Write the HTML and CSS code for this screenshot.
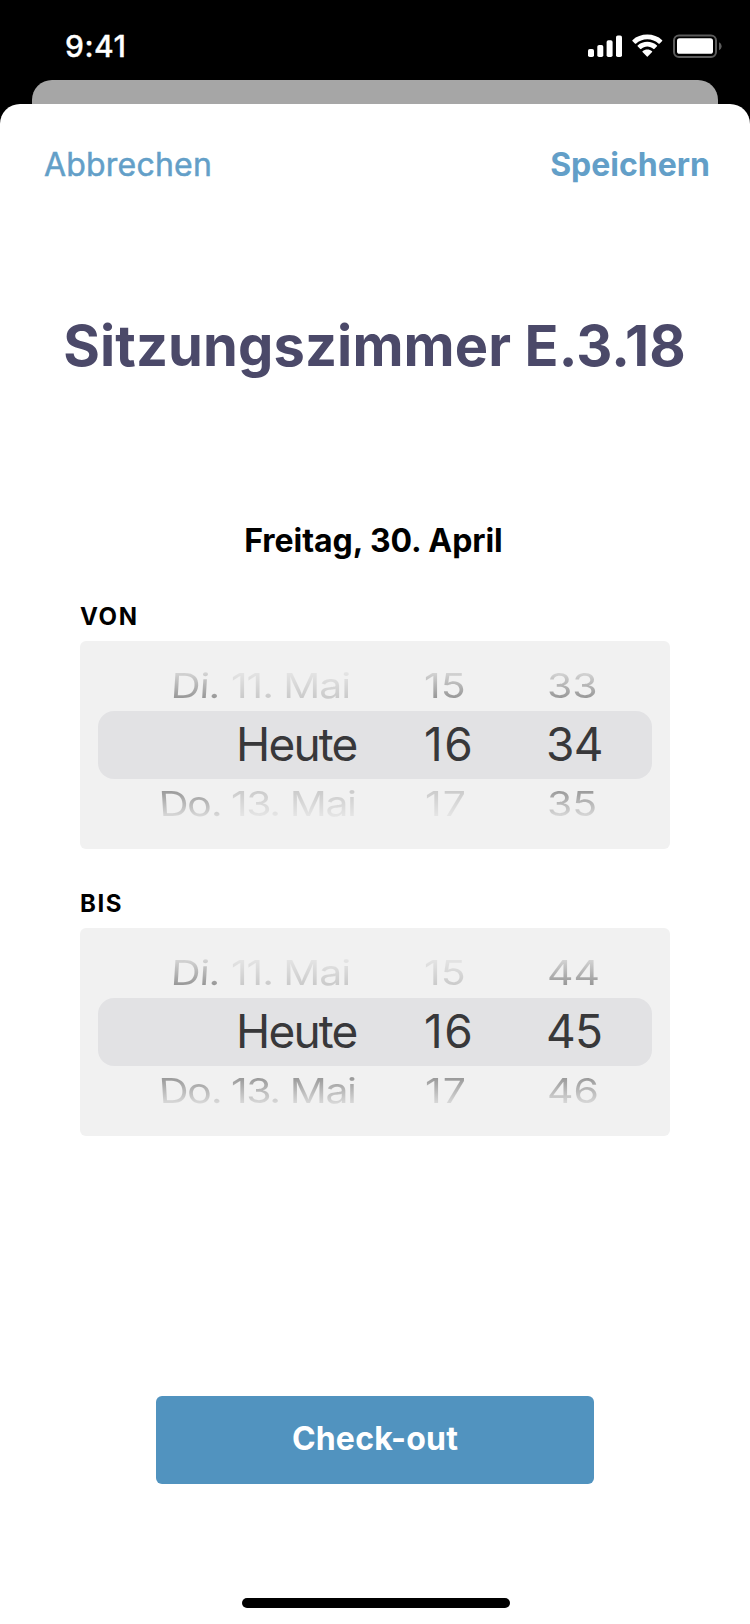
FILE: index.html
```html
<!DOCTYPE html>
<html lang="de">
<head>
<meta charset="utf-8">
<title>Check-out</title>
<link rel="stylesheet" href="styles.css">
</head>
<body>
<div class="screen">
  <header class="status">
    <span class="time">9:41</span>
    <svg class="status-icons" width="136" height="24" viewBox="0 0 136 24" fill="#fff">
      <rect x="0" y="14" width="6" height="8" rx="1.8"/>
      <rect x="9.3" y="10" width="6" height="12" rx="1.8"/>
      <rect x="18.6" y="5.2" width="6" height="16.8" rx="1.8"/>
      <rect x="28" y="0.4" width="6" height="21.6" rx="1.8"/>
      <path d="M59.3 4.2c4.300 0 8.300 1.600 11.400 4.500.200.200.600.200.800 0l2.700-2.700c.200-.200.200-.600 0-.800C70.200 1.400 64.900-.4 59.300-.4S48.400 1.400 44.400 5.200c-.200.200-.200.600 0 .800l2.700 2.700c.200.200.600.200.800 0C51 5.800 55 4.200 59.300 4.200z"/>
      <path d="M59.300 11.600c2.300 0 4.500.900 6.200 2.400.300.200.600.200.800 0l2.700-2.700c.200-.300.200-.600 0-.900-5.500-5-13.900-5-19.400 0-.200.300-.200.600 0 .900l2.700 2.700c.200.200.500.200.800 0 1.700-1.500 3.900-2.400 6.200-2.400z"/>
      <path d="M64.100 16.300c.200.200.200.600 0 .800l-4.400 4.400c-.200.300-.600.300-.8 0l-4.400-4.400c-.200-.200-.200-.6 0-.8 2.800-2.300 6.800-2.300 9.600 0z"/>
      <rect x="86" y="0.500" width="42" height="21.500" rx="5" fill="none" stroke="#5c5c5c" stroke-width="2"/>
      <rect x="89" y="3.300" width="36" height="15.500" rx="2.600"/>
      <path d="M131 7.300v8c1.500-.7 2.600-2.200 2.600-4s-1.100-3.300-2.600-4z" fill="#5c5c5c"/>
    </svg>
  </header>
  <div class="sheet-back"></div>
  <main class="sheet">
    <nav class="nav">
      <span class="cancel">Abbrechen</span>
      <span class="save">Speichern</span>
    </nav>
    <h1 class="title">Sitzungszimmer E.3.18</h1>
    <h2 class="date">Freitag, 30. April</h2>
    <section class="field">
      <h3 class="label">VON</h3>
      <div class="picker">
        <div class="row above">
          <span class="weekday tilt-in">Di.</span><span class="day faint">11. Mai</span><span class="hour">15</span><span class="minute">33</span>
        </div>
        <div class="row current">
          <span class="today">Heute</span><span class="hour">16</span><span class="minute">34</span>
        </div>
        <div class="row below">
          <span class="weekday tilt-out">Do.</span><span class="day faint">13. Mai</span><span class="hour faint">17</span><span class="minute">35</span>
        </div>
      </div>
    </section>
    <section class="field">
      <h3 class="label">BIS</h3>
      <div class="picker">
        <div class="row above">
          <span class="weekday tilt-in">Di.</span><span class="day faint">11. Mai</span><span class="hour faint">15</span><span class="minute">44</span>
        </div>
        <div class="row current">
          <span class="today">Heute</span><span class="hour">16</span><span class="minute">45</span>
        </div>
        <div class="row below">
          <span class="weekday tilt-out">Do.</span><span class="day">13. Mai</span><span class="hour">17</span><span class="minute">46</span>
        </div>
      </div>
    </section>
    <button class="checkout">Check-out</button>
    <div class="home-bar"></div>
  </main>
</div>
</body>
</html>
```

FILE: styles.css
```css
* { box-sizing: border-box; margin: 0; }
body { background: #000; font-family: Inter, "Liberation Sans", sans-serif; }
.screen { width: 750px; height: 1624px; overflow: hidden; background: #000; display: flex; flex-direction: column; }
.status { height: 80px; flex: none; display: flex; justify-content: space-between; align-items: flex-start; padding: 35px 26px 0 65px; color: #fff; }
.time { font-size: 30px; line-height: 23px; font-weight: 500; letter-spacing: .5px; -webkit-text-stroke: .3px #fff; }
.status-icons { display: block; overflow: visible; }
.sheet-back { flex: none; height: 24px; margin: 0 32px; background: #a6a6a6; border-radius: 20px 20px 0 0; }
.sheet { flex: 1; background: #fff; border-radius: 20px 20px 0 0; display: flex; flex-direction: column; }
.nav { display: flex; justify-content: space-between; padding: 41px 40px 0 44px; font-size: 32px; line-height: 40px; color: #639fc8; }
.cancel { letter-spacing: .2px; -webkit-text-stroke: .5px #639fc8; }
.save { font-weight: 700; }
.title { margin-top: 125px; padding-right: 1px; text-align: center; font-size: 56px; line-height: 72px; font-weight: 700; letter-spacing: .1px; color: #4b4969; white-space: nowrap; }
.date { margin-top: 139px; padding-right: 3px; text-align: center; font-size: 32px; line-height: 40px; font-weight: 700; letter-spacing: -.05px; color: #000; }
.field { margin: 41px 80px 0; }
.field + .field { margin-top: 40px; }
.label { font-size: 24px; line-height: 30px; font-weight: 700; letter-spacing: 1.6px; margin-bottom: 9px; }
.picker { height: 208px; padding: 19px 18px 0; background: #f1f1f1; border-radius: 6px; }
.row { display: grid; grid-template-columns: 121px 12px 193px 123px 1fr; align-items: center; line-height: 40px; white-space: nowrap; }
.row span { justify-self: start; transform-origin: 0 50%; }
.row .weekday { grid-column: 1; justify-self: end; transform-origin: 100% 50%; }
.row .day { grid-column: 3; }
.row .hour { grid-column: 4; }
.row .minute { grid-column: 5; }
.above, .below { font-size: 41px; font-weight: 400; padding-bottom: 2px; }
.above { height: 51px; }
.below { height: 49px; }
.above span, .below span { color: transparent; -webkit-background-clip: text; background-clip: text; transform: scaleY(.84); }
.above .day { letter-spacing: -1.1px; }
.below .day { letter-spacing: -1.4px; }
.above .weekday, .below .weekday { margin-right: -1px; letter-spacing: -.7px; }
.below .weekday { letter-spacing: -1.5px; }
.above span { background-image: linear-gradient(#d4d4d4 13%, #999 87%); }
.above .faint { background-image: linear-gradient(#e4e4e4 13%, #cbcbcb 87%); }
.below span { background-image: linear-gradient(#999 13%, #d6d6d6 87%); }
.below .faint { background-image: linear-gradient(#cbcbcb 13%, #e4e4e4 87%); }
.above .tilt-in { transform: scaleY(.84) skewX(-3deg); }
.below .tilt-out { transform: scaleY(.84) skewX(3deg); }
.below .hour { margin-left: 1px; letter-spacing: 1px; }
.current { height: 68px; padding-bottom: 2px; background: #e2e2e4; border-radius: 16px; font-size: 46px; font-weight: 400; color: #38383a; }
.row .today { grid-column: 3; margin-left: 5px; letter-spacing: -1.8px; }
.current .hour { letter-spacing: 1.6px; }
.current .minute { margin-left: -1px; letter-spacing: -.6px; }
.checkout { align-self: center; flex: none; width: 438px; height: 88px; margin-top: 260px; padding: 0 0 2px; border: 0; border-radius: 6px; background: #5193bf; color: #fff; font: 700 32px/40px Inter, sans-serif; letter-spacing: .2px; }
.home-bar { flex: none; width: 268px; height: 10px; margin: 114px 0 0 242px; border-radius: 5px; background: #000; }
```
